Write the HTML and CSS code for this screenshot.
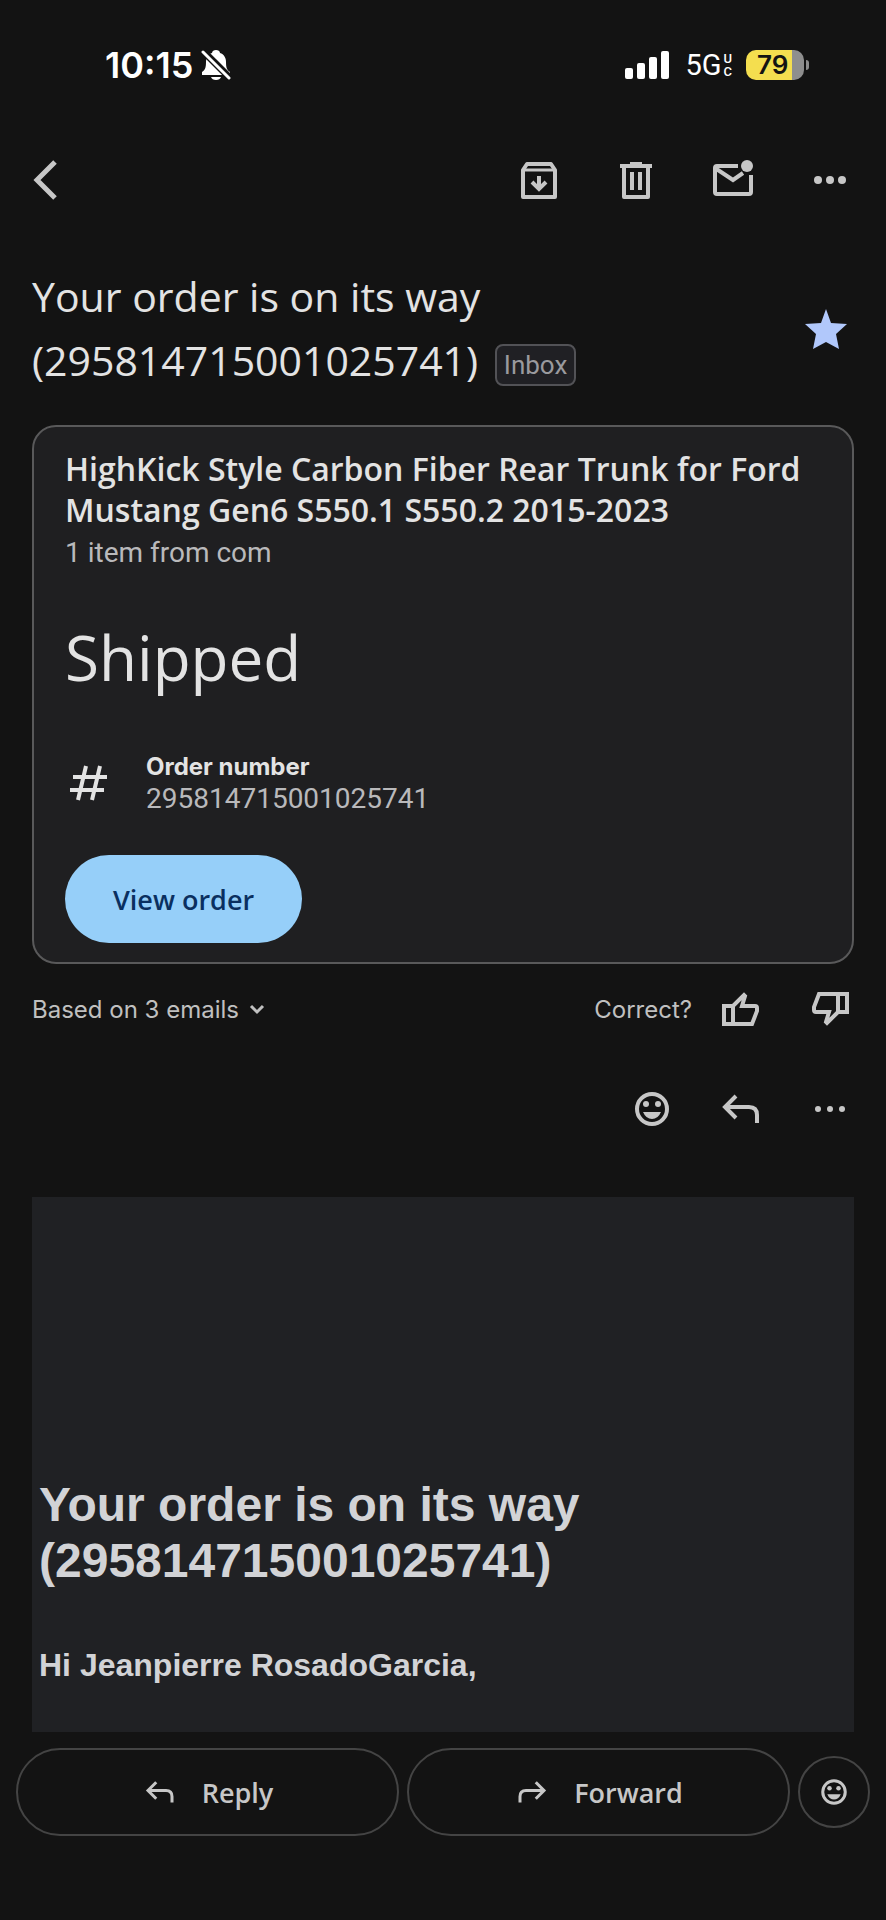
FILE: index.html
```
<!DOCTYPE html>
<html lang="en">

<head>
    <meta charset="UTF-8">
    <meta name="viewport" content="width=device-width, initial-scale=1.0">
    <title>Your order is on its way</title>
    <link rel="stylesheet" href="styles.css">
</head>

<body>
    <!-- shared icons -->
    <svg class="sprite" aria-hidden="true">
        <symbol id="reply" viewBox="0 0 48 48">
            <path d="M19 11L8 22l11 11M8 22h24q8 0 8 8v8" fill="none" stroke="currentColor" stroke-width="4"/>
        </symbol>
        <symbol id="smile" viewBox="0 0 48 48">
            <circle cx="24" cy="24" r="15" fill="none" stroke="currentColor" stroke-width="4"/>
            <circle cx="18" cy="19" r="3" fill="currentColor"/>
            <circle cx="30" cy="19" r="3" fill="currentColor"/>
            <path d="M15 27h18q-3 7-9 7t-9-7z" fill="currentColor"/>
        </symbol>
        <symbol id="thumb" viewBox="0 0 48 48">
            <path d="M7 21h9L27 10l1 1-3 10h13q2 0 2 2v3l-5 13H7zM16 21v18" fill="none" stroke="currentColor" stroke-width="4"/>
        </symbol>
    </svg>

    <div class="status-bar">
        <div class="status-left">
            <span class="time">10:15</span>
            <svg class="bell" viewBox="0 0 30 32" aria-hidden="true">
                <path d="M15 1c2 0 4 1 4 3 4 1 6 5 6 9 0 6 1 8 4 10v3H1v-3c3-2 4-4 4-10 0-4 2-8 6-9 0-2 2-3 4-3z" fill="#fff"/>
                <path d="M10 28h10q-1 3-5 3t-5-3z" fill="#fff"/>
                <path d="M0 0L30 30" stroke="#131313" stroke-width="7"/>
                <path d="M2 3L28 29" stroke="#fff" stroke-width="3" stroke-linecap="round"/>
            </svg>
        </div>
        <div class="status-right">
            <svg class="signal" viewBox="0 0 44 28" aria-hidden="true">
                <rect x="0" y="17" width="8" height="11" rx="2"/>
                <rect x="12" y="12" width="8" height="16" rx="2"/>
                <rect x="24" y="6" width="8" height="22" rx="2"/>
                <rect x="36" y="0" width="8" height="28" rx="2"/>
            </svg>
            <span class="network">5G<span class="uc"><span>U</span><span>C</span></span></span>
            <span class="battery"><span class="level">79</span></span>
        </div>
    </div>

    <header class="toolbar">
        <button class="icon-btn back" aria-label="Back">
            <svg viewBox="0 0 48 48"><path d="M23 6L5 24l18 18" fill="none" stroke="currentColor" stroke-width="5"/></svg>
        </button>
        <button class="icon-btn" aria-label="Archive">
            <svg viewBox="0 0 48 48" fill="none" stroke="currentColor" stroke-width="4" stroke-linejoin="round">
                <path d="M8 14l4-6h24l4 6v27H8z"/>
                <path d="M8 14h32" stroke-width="3"/>
                <path d="M24 20v12M17 26l7 7 7-7" stroke-linejoin="miter"/>
            </svg>
        </button>
        <button class="icon-btn" aria-label="Delete">
            <svg viewBox="0 0 48 48" fill="none" stroke="currentColor" stroke-width="4" stroke-linejoin="round">
                <path d="M8 10h32M18 8h12M12 10v31h24V10M20 16v18M28 16v18"/>
            </svg>
        </button>
        <button class="icon-btn" aria-label="Mark unread">
            <svg viewBox="0 0 48 48" fill="none" stroke="currentColor" stroke-width="4">
                <path d="M29 10H8q-2 0-2 2v24q0 2 2 2h32q2 0 2-2V19M6 12l18 12 10-7"/>
                <circle cx="38" cy="10" r="6" fill="currentColor" stroke="none"/>
            </svg>
        </button>
        <button class="icon-btn" aria-label="More">
            <svg viewBox="0 0 48 48" fill="currentColor">
                <circle cx="12" cy="24" r="4"/><circle cx="24" cy="24" r="4"/><circle cx="36" cy="24" r="4"/>
            </svg>
        </button>
    </header>

    <div class="subject">
        <h1>Your order is on its way<br>(295814715001025741) <span class="tag">Inbox</span></h1>
        <button class="icon-btn star" aria-label="Starred">
            <svg viewBox="0 0 48 48"><path d="M24 5l5 14 16 1-11 10 3 15-13-7-13 7 3-15L3 20l16-1z" fill="currentColor"/></svg>
        </button>
    </div>

    <section class="card">
        <h2>HighKick Style Carbon Fiber Rear Trunk for Ford Mustang Gen6 S550.1 S550.2 2015-2023</h2>
        <p class="from">1 item from com</p>
        <p class="state">Shipped</p>
        <div class="order">
            <svg class="hash" viewBox="0 0 48 48" aria-hidden="true">
                <path d="M21 7l-8 34M35 7l-8 34M8 18h34M5 31h34" fill="none" stroke="currentColor" stroke-width="4"/>
            </svg>
            <div>
                <p class="order-label">Order number</p>
                <p class="order-value">295814715001025741</p>
            </div>
        </div>
        <button class="view-order">View order</button>
    </section>

    <div class="feedback">
        <button class="based">Based on 3 emails
            <svg viewBox="0 0 16 12" aria-hidden="true"><path d="M2 3l6 6 6-6" fill="none" stroke="currentColor" stroke-width="3"/></svg>
        </button>
        <span class="correct">Correct?</span>
        <button class="icon-btn" aria-label="Yes"><svg><use href="#thumb"/></svg></button>
        <button class="icon-btn" aria-label="No"><svg class="down"><use href="#thumb"/></svg></button>
    </div>

    <div class="message-bar">
        <button class="icon-btn" aria-label="React"><svg><use href="#smile"/></svg></button>
        <button class="icon-btn" aria-label="Reply"><svg><use href="#reply"/></svg></button>
        <button class="icon-btn" aria-label="More">
            <svg viewBox="0 0 48 48" fill="currentColor">
                <circle cx="12" cy="24" r="3"/><circle cx="24" cy="24" r="3"/><circle cx="36" cy="24" r="3"/>
            </svg>
        </button>
    </div>

    <article class="mail">
        <h2>Your order is on its way (295814715001025741)</h2>
        <p>Hi Jeanpierre RosadoGarcia,</p>
    </article>

    <footer class="actions">
        <button class="pill"><svg><use href="#reply"/></svg>Reply</button>
        <button class="pill"><svg class="flip"><use href="#reply"/></svg>Forward</button>
        <button class="round" aria-label="React"><svg><use href="#smile"/></svg></button>
    </footer>
</body>

</html>
```
FILE: styles.css
```
* {
    box-sizing: border-box;
    margin: 0;
    padding: 0;
}

body {
    background-color: #131313;
    color: #e3e3e3;
    font-family: Roboto, sans-serif;
}

button {
    background: none;
    border: none;
    color: #c7c7c7;
    font-family: inherit;
    cursor: pointer;
}

svg {
    display: block;
}

.sprite {
    display: none;
}

/* status bar */
.status-bar {
    display: flex;
    justify-content: space-between;
    align-items: center;
    height: 130px;
    padding: 0 77px 0 105px;
    color: #fff;
    font-family: Inter, sans-serif;
}

.status-left,
.status-right {
    display: flex;
    align-items: center;
}

.time {
    font-size: 36px;
    font-weight: 600;
}

.bell {
    width: 30px;
    height: 32px;
    margin-left: 8px;
}

.signal {
    width: 44px;
    height: 28px;
    fill: #fff;
}

.network {
    display: flex;
    align-items: center;
    margin-left: 16px;
    font-family: Roboto, sans-serif;
    font-size: 29px;
    font-weight: 400;
}

.uc {
    display: flex;
    flex-direction: column;
    margin-left: 2px;
    font-size: 13px;
    font-weight: 500;
    line-height: 13px;
}

.battery {
    position: relative;
    width: 58px;
    height: 30px;
    margin: 0 5px 0 14px;
    border-radius: 10px;
    background: linear-gradient(to right, #f4de4f 79%, #8e8e8e 79%);
}

.battery::after {
    content: "";
    position: absolute;
    right: -5px;
    top: 10px;
    width: 3px;
    height: 10px;
    border-radius: 0 4px 4px 0;
    background-color: #8e8e8e;
}

.level {
    display: block;
    padding-left: 11px;
    color: #131313;
    font-size: 26px;
    font-weight: 600;
    line-height: 30px;
}

/* toolbar */
.toolbar {
    display: flex;
    gap: 49px;
    padding: 26px 32px 24px;
}

.icon-btn {
    flex: none;
    width: 48px;
    height: 48px;
}

.icon-btn svg {
    width: 48px;
    height: 48px;
}

.back {
    margin-right: auto;
}

/* subject */
.subject {
    display: flex;
    justify-content: space-between;
    align-items: center;
    padding: 36px 36px 0 32px;
}

.subject h1 {
    font-family: "Open Sans", sans-serif;
    font-size: 41px;
    font-weight: 400;
    line-height: 64px;
}

.tag {
    display: inline-block;
    height: 42px;
    margin-left: 6px;
    padding: 0 7px;
    border: 2px solid #525256;
    border-radius: 8px;
    background-color: #202024;
    color: #9a9a9e;
    font-family: Roboto, sans-serif;
    font-size: 26px;
    line-height: 38px;
    vertical-align: middle;
}

.star {
    color: #b1c8fb;
}

/* order card */
.card {
    margin: 33px 32px 0;
    padding: 21px 31px 19px;
    border: 2px solid #59595a;
    border-radius: 24px;
    background-color: #1f1f21;
}

.card h2 {
    font-family: "Open Sans", sans-serif;
    font-size: 32px;
    font-weight: 600;
    line-height: 41px;
}

.from {
    margin-top: 3px;
    color: #b9b9bb;
    font-size: 28px;
    line-height: 40px;
}

.state {
    margin-top: 44px;
    font-family: "Open Sans", sans-serif;
    font-size: 62px;
    line-height: 80px;
}

.order {
    display: flex;
    align-items: center;
    gap: 33px;
    margin-top: 54px;
}

.hash {
    width: 48px;
    height: 48px;
}

.order-label {
    font-family: Inter, sans-serif;
    font-size: 24px;
    font-weight: 700;
    line-height: 32px;
}

.order-value {
    color: #b9b9bb;
    font-size: 28px;
    line-height: 32px;
}

.view-order {
    height: 88px;
    margin-top: 40px;
    padding: 0 48px;
    border-radius: 44px;
    background-color: #96cff9;
    color: #0a2f60;
    font-family: "Open Sans", sans-serif;
    font-size: 27px;
    font-weight: 600;
}

/* feedback */
.feedback {
    display: flex;
    align-items: center;
    gap: 41px;
    padding: 21px 32px 0;
    color: #c0c0c0;
    font-family: Inter, sans-serif;
    font-size: 24px;
}

.based {
    display: flex;
    align-items: center;
    gap: 10px;
    margin-right: auto;
    color: #c0c0c0;
    font-size: 24px;
}

.based svg {
    width: 16px;
    height: 12px;
}

.correct {
    margin-right: -16px;
}

.down {
    transform: rotate(180deg);
}

.message-bar {
    display: flex;
    justify-content: flex-end;
    gap: 41px;
    padding: 52px 32px 64px;
}

/* mail body */
.mail {
    margin: 0 32px;
    padding: 280px 7px 47px;
    background-color: #202124;
    color: #d2d3d6;
    font-family: "Liberation Sans", Arial, sans-serif;
}

.mail h2 {
    font-size: 48px;
    line-height: 56px;
}

.mail p {
    margin-top: 56px;
    font-size: 32px;
    font-weight: 700;
    line-height: 40px;
}

/* bottom actions */
.actions {
    display: flex;
    align-items: center;
    gap: 8px;
    padding: 16px 16px 83px;
}

.pill {
    display: flex;
    flex: 1;
    justify-content: center;
    align-items: center;
    gap: 24px;
    height: 88px;
    border: 2px solid #444;
    border-radius: 44px;
    font-family: "Open Sans", sans-serif;
    font-size: 27px;
    font-weight: 600;
}

.pill svg,
.round svg {
    width: 36px;
    height: 36px;
}

.flip {
    transform: scaleX(-1);
}

.round {
    display: flex;
    justify-content: center;
    align-items: center;
    width: 72px;
    height: 72px;
    border: 2px solid #444;
    border-radius: 50%;
}
```
